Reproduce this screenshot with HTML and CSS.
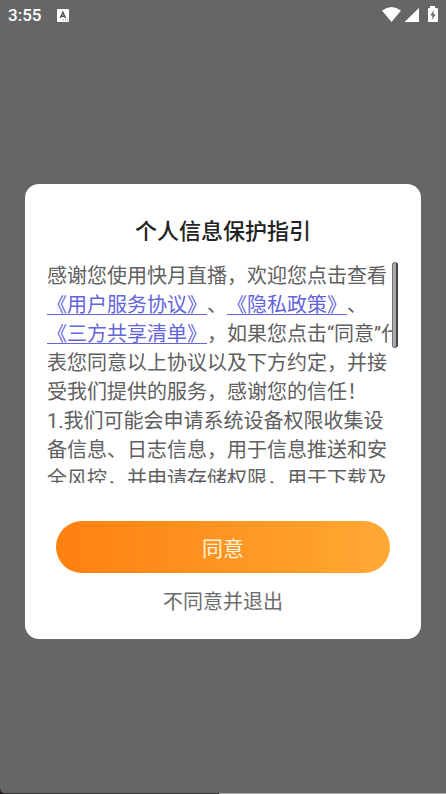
FILE: index.html
```html
<!DOCTYPE html>
<html lang="zh-CN">
<head>
<meta charset="utf-8">
<meta name="viewport" content="width=device-width, initial-scale=1">
<title>个人信息保护指引</title>
<link rel="stylesheet" href="styles.css">
</head>
<body>
<header class="status">
  <span class="time">3:55</span>
  <svg class="app-icon" width="12" height="13" viewBox="0 0 12 13" aria-hidden="true">
    <rect width="12" height="13" rx="1" fill="#fff"/>
    <path d="M3.300 9 5.900 3.300 8.500 9M4.400 7.300h3" fill="none" stroke="#555" stroke-width="1.500"/>
    <path d="M6 11h1M8 11h1M10 11h1" stroke="#777" stroke-width="1"/>
  </svg>
  <svg class="signals" width="58" height="18" viewBox="0 0 58 18" aria-hidden="true">
    <path d="M1 4.600Q10.500-2.600 20 4.600L10.500 16Z" fill="#fff"/>
    <path d="M38 2v14H23.500Z" fill="#fff"/>
    <path d="M49 0h5v2h2q1 0 1 1v12q0 1-1 1h-8q-1 0-1-1V3q0-1 1-1h1Z" fill="#fff"/>
    <path d="M53 4 49.300 9.500H51.600L50.800 14 54.700 8.300H52.300Z" fill="#666"/>
  </svg>
</header>
<main class="stage">
  <section class="dialog" role="dialog" aria-labelledby="title">
    <h1 class="title" id="title">个人信息保护指引</h1>
    <div class="scroller">
      <p class="terms">感谢您使用快月直播，欢迎您点击查看<br><a href="#user">《用户服务协议》</a>、<a href="#privacy">《隐私政策》</a>、<br><a href="#share">《三方共享清单》</a>，如果您点击“同意”代<br>表您同意以上协议以及下方约定，并接<br>受我们提供的服务，感谢您的信任！<br>1.我们可能会申请系统设备权限收集设<br>备信息、日志信息，用于信息推送和安<br>全风控，并申请存储权限，用于下载及</p>
      <span class="thumb"></span>
    </div>
    <button class="agree" type="button">同意</button>
    <button class="decline" type="button">不同意并退出</button>
  </section>
</main>
<footer class="edge"><span class="edge-dark"></span></footer>
</body>
</html>
```
FILE: styles.css
```css
* {
  box-sizing: border-box;
}

body {
  margin: 0;
  min-height: 100vh;
  display: flex;
  flex-direction: column;
  background: #666;
  color: #606060;
  font-family: Roboto, "Noto Sans CJK SC", sans-serif;
  text-spacing-trim: space-all;
}

.status {
  display: flex;
  align-items: center;
  height: 30px;
  padding: 0 7px 0 8px;
  color: #fff;
}

.time {
  font-size: 17px;
  line-height: 20px;
  font-weight: 500;
}

.app-icon {
  margin-left: 16px;
}

.signals {
  margin-left: auto;
}

.stage {
  flex: 1;
  display: flex;
  align-items: center;
  padding: 0 25px;
}

.dialog {
  width: 100%;
  padding: 32px 22px 20px;
  border-radius: 14px;
  background: #fff;
}

.title {
  margin: 0 0 12px;
  color: #222;
  font-size: 22px;
  line-height: 32px;
  font-weight: 500;
  text-align: center;
}

.scroller {
  position: relative;
  height: 223px;
  margin-right: 1px;
  overflow: hidden;
}

.terms {
  margin: 0;
  padding-top: 2px;
  font-size: 20px;
  line-height: 29px;
  white-space: nowrap;
}

.terms a {
  color: #6464dc;
  text-decoration: underline;
  text-decoration-thickness: 1px;
  text-underline-offset: 2px;
}

.thumb {
  position: absolute;
  top: 2px;
  right: 0;
  width: 6px;
  height: 86px;
  border: 1px solid #777;
  border-right: 2px solid #444;
  border-radius: 3px;
  background: #aaa;
}

.agree,
.decline {
  display: block;
  border: 0;
  font-family: inherit;
  cursor: pointer;
}

.agree {
  width: calc(100% - 18px);
  height: 52px;
  margin: 38px auto 12px;
  border-radius: 26px;
  background: linear-gradient(90deg, #ff8010, #ffa934);
  color: #fff3dc;
  font-size: 21px;
}

.decline {
  margin: 0 auto;
  padding: 0 16px;
  background: none;
  color: #6c6c6c;
  font-size: 20px;
  line-height: 34px;
}

.edge {
  position: relative;
  height: 1px;
  background: #aaa;
}

.edge::before {
  content: "";
  position: absolute;
  left: 0;
  bottom: 0;
  width: 6px;
  height: 6px;
  background: radial-gradient(circle at top right, transparent 5px, #1a1512 7px);
}

.edge-dark {
  display: block;
  width: 49%;
  height: 1px;
  background: #333;
}
```
